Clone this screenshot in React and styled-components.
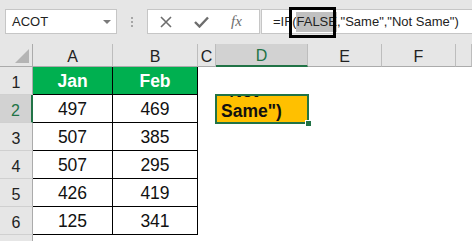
import React from "react";
import styled, { createGlobalStyle, css } from "styled-components";

const Global = createGlobalStyle`
  html, body { margin: 0; padding: 0; background: #ffffff; }
  body { font-family: "Liberation Sans", Arial, sans-serif; overflow: hidden; }
  * { box-sizing: border-box; }
`;

const Page = styled.div`
  width: 472px;
  height: 241px;
  overflow: hidden;
  background: #ffffff;
`;

const FormulaBar = styled.div`
  height: 44px;
  background: #e6e6e6;
  display: flex;
  align-items: flex-start;
  padding: 9px 0 0 5px;
`;

const NameBox = styled.div`
  width: 112px;
  height: 25px;
  background: #ffffff;
  border: 1px solid #c6c6c6;
  display: flex;
  align-items: center;
  justify-content: space-between;
  padding: 0 5px 0 6px;
  font-size: 13px;
  color: #222;
`;

const Caret = styled.span`
  width: 0;
  height: 0;
  border-left: 4px solid transparent;
  border-right: 4px solid transparent;
  border-top: 4px solid #7a7a7a;
  margin-top: 1px;
`;

const Grip = styled.div`
  width: 30px;
  height: 25px;
  display: flex;
  flex-direction: column;
  align-items: center;
  justify-content: center;
  gap: 2px;
`;

const Dot = styled.span`
  width: 2px;
  height: 2px;
  background: #a6a6a6;
`;

const FxBox = styled.div`
  width: 113px;
  height: 25px;
  background: #ffffff;
  border: 1px solid #c6c6c6;
  display: flex;
  align-items: center;
  padding-left: 12px;
  gap: 22px;
  color: #6d6d6d;
`;

const Fx = styled.span`
  font-family: "Liberation Serif", "Times New Roman", serif;
  font-style: italic;
  font-size: 15px;
  color: #6d6d6d;
  margin-left: 0px;
`;

const FormulaInput = styled.div`
  flex: 1;
  margin-left: 1px;
  margin-right: -10px;
  height: 25px;
  background: #ffffff;
  border: 1px solid #c6c6c6;
  border-right: none;
  display: flex;
  align-items: center;
  padding-left: 11px;
  font-size: 13px;
  color: #222;
  white-space: pre;
  position: relative;
`;

const Highlight = styled.span`
  background: #c0c0c0;
  padding: 2px 0 3px;
`;

const Annotation = styled.div`
  position: absolute;
  left: 27px;
  top: -3px;
  width: 47px;
  height: 31px;
  border: 3px solid #000000;
`;

const Sheet = styled.div`
  display: grid;
  grid-template-columns: 33px 80px 85px 18px 92px 74px 74px 1fr;
  grid-template-rows: 23px repeat(7, 28px);
`;

const Corner = styled.div`
  background: #e6e6e6;
  border-right: 1px solid #ababab;
  border-bottom: 1px solid #ababab;
  display: flex;
  align-items: flex-end;
  justify-content: flex-end;
  padding: 0 3px 3px 0;
`;

const ColHead = styled.div`
  background: #e6e6e6;
  border-right: 1px solid #bdbdbd;
  border-bottom: 1px solid #ababab;
  display: flex;
  align-items: center;
  justify-content: center;
  padding-top: 3px;
  font-size: 16px;
  color: #222;
  ${(p) =>
    p.$selected &&
    css`
      background: #d2d2d2;
      color: #217346;
      border-bottom: 2px solid #217346;
    `}
`;

const RowHead = styled.div`
  background: #e6e6e6;
  border-right: 1px solid #ababab;
  border-bottom: 1px solid #d0d0d0;
  display: flex;
  align-items: center;
  justify-content: center;
  padding-top: 4px;
  font-size: 16px;
  color: #222;
  ${(p) =>
    p.$selected &&
    css`
      background: #d2d2d2;
      color: #217346;
      border-right: 2px solid #217346;
    `}
`;

const Cell = styled.div`
  display: flex;
  align-items: center;
  justify-content: center;
  font-size: 17.5px;
  color: #111;
  padding-top: 1px;
  ${(p) =>
    p.$kind === "head" &&
    css`
      background: #00b050;
      color: #ffffff;
      font-weight: bold;
      border-right: 1px solid #000;
      border-bottom: 1px solid #000;
    `}
  ${(p) =>
    p.$kind === "data" &&
    css`
      border-right: 1px solid #000;
      border-bottom: 1px solid #000;
    `}
`;

const ActiveCell = styled.div`
  position: relative;
  margin: -1px;
  background: #ffc000;
  border: 2px solid #217346;
  display: flex;
  flex-direction: column;
  justify-content: flex-end;
  padding: 0 0 1px 4px;
  font-size: 17.5px;
  font-weight: bold;
  line-height: 20px;
  color: #111;
  white-space: pre;
  z-index: 1;
`;

const Clip = styled.div`
  overflow: hidden;
  display: flex;
  flex-direction: column;
  justify-content: flex-end;
  height: 100%;
`;

const FillHandle = styled.span`
  position: absolute;
  right: -5px;
  bottom: -5px;
  width: 7px;
  height: 7px;
  background: #217346;
  border: 1px solid #ffffff;
`;

const CrossIcon = () => (
  <svg width="12" height="12" viewBox="0 0 12 12">
    <path d="M1 1 L11 11 M11 1 L1 11" stroke="#6d6d6d" strokeWidth="1.6" fill="none" />
  </svg>
);

const CheckIcon = () => (
  <svg width="15" height="12" viewBox="0 0 15 12">
    <path d="M1 6 L5.5 10.5 L14 1.5" stroke="#6d6d6d" strokeWidth="2.4" fill="none" />
  </svg>
);

const CornerTriangle = () => (
  <svg width="14" height="14" viewBox="0 0 14 14">
    <polygon points="14,0 14,14 0,14" fill="#b4b4b4" />
  </svg>
);

const columns = ["A", "B", "C", "D", "E", "F", ""];
const data = [
  [497, 469],
  [507, 385],
  [507, 295],
  [426, 419],
  [125, 341],
];

export default function App() {
  const rows = [];
  for (let r = 1; r <= 7; r++) {
    const cells = [];
    cells.push(
      <RowHead key={`h${r}`} $selected={r === 2}>
        {r <= 6 ? r : ""}
      </RowHead>
    );
    for (let c = 0; c < 7; c++) {
      const key = `c${r}-${c}`;
      if (r === 1 && c < 2) {
        cells.push(
          <Cell key={key} $kind="head">
            {c === 0 ? "Jan" : "Feb"}
          </Cell>
        );
      } else if (r >= 2 && r <= 6 && c < 2) {
        cells.push(
          <Cell key={key} $kind="data">
            {data[r - 2][c]}
          </Cell>
        );
      } else if (r === 2 && c === 3) {
        cells.push(
          <ActiveCell key={key}>
            <Clip>
              <div>{'"Not'}</div>
              <div>{'Same")'}</div>
            </Clip>
            <FillHandle />
          </ActiveCell>
        );
      } else {
        cells.push(<Cell key={key} />);
      }
    }
    rows.push(...cells);
  }

  return (
    <Page>
      <Global />
      <FormulaBar>
        <NameBox>
          <span>ACOT</span>
          <Caret />
        </NameBox>
        <Grip>
          <Dot />
          <Dot />
          <Dot />
        </Grip>
        <FxBox>
          <CrossIcon />
          <CheckIcon />
          <Fx>fx</Fx>
        </FxBox>
        <FormulaInput>
          {"=IF("}
          <Highlight>FALSE</Highlight>
          {',"Same","Not Same")'}
          <Annotation />
        </FormulaInput>
      </FormulaBar>
      <Sheet>
        <Corner>
          <CornerTriangle />
        </Corner>
        {columns.map((col, i) => (
          <ColHead key={i} $selected={col === "D"}>
            {col}
          </ColHead>
        ))}
        {rows}
      </Sheet>
    </Page>
  );
}
